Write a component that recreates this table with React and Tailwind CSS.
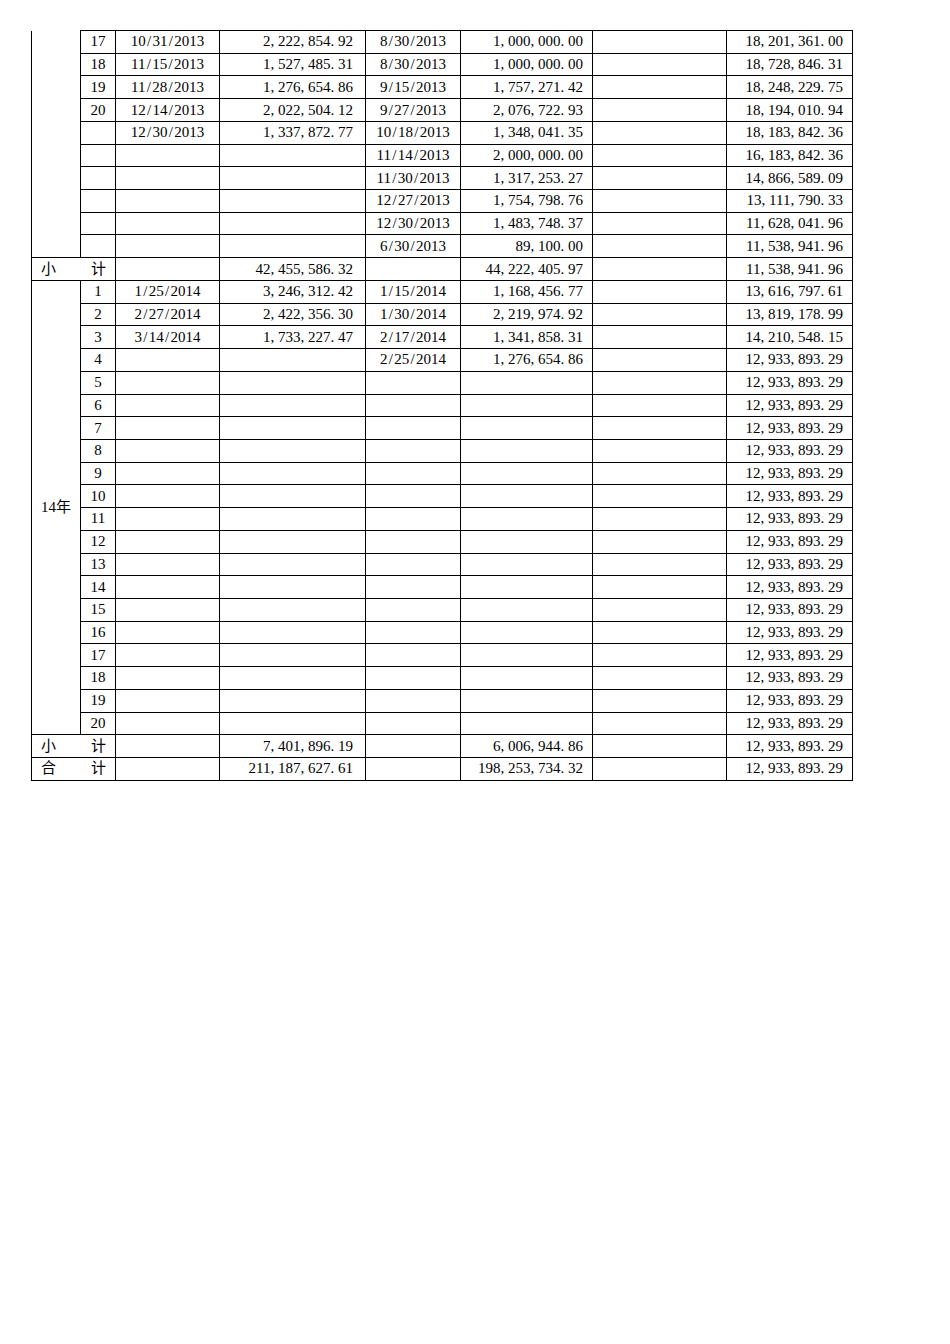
import React from 'react';

const FULL = '12,933,893.29';

const top = [
  ['17', '10/31/2013', '2,222,854.92', '8/30/2013', '1,000,000.00', '18,201,361.00'],
  ['18', '11/15/2013', '1,527,485.31', '8/30/2013', '1,000,000.00', '18,728,846.31'],
  ['19', '11/28/2013', '1,276,654.86', '9/15/2013', '1,757,271.42', '18,248,229.75'],
  ['20', '12/14/2013', '2,022,504.12', '9/27/2013', '2,076,722.93', '18,194,010.94'],
  ['', '12/30/2013', '1,337,872.77', '10/18/2013', '1,348,041.35', '18,183,842.36'],
  ['', '', '', '11/14/2013', '2,000,000.00', '16,183,842.36'],
  ['', '', '', '11/30/2013', '1,317,253.27', '14,866,589.09'],
  ['', '', '', '12/27/2013', '1,754,798.76', '13,111,790.33'],
  ['', '', '', '12/30/2013', '1,483,748.37', '11,628,041.96'],
  ['', '', '', '6/30/2013', '89,100.00', '11,538,941.96'],
];

const y14 = [
  ['1', '1/25/2014', '3,246,312.42', '1/15/2014', '1,168,456.77', '13,616,797.61'],
  ['2', '2/27/2014', '2,422,356.30', '1/30/2014', '2,219,974.92', '13,819,178.99'],
  ['3', '3/14/2014', '1,733,227.47', '2/17/2014', '1,341,858.31', '14,210,548.15'],
  ['4', '', '', '2/25/2014', '1,276,654.86', FULL],
];
for (let i = 5; i <= 20; i++) y14.push([String(i), '', '', '', '', FULL]);

// SimSun-like spacing: punctuation takes half an em, like the digits
const N = ({ t }) => (
  <>
    {t.split('').map((c, i) =>
      c === ',' || c === '.' ? (
        <span key={i} className="inline-block w-[0.5em] text-left">{c}</span>
      ) : c === '/' ? (
        <span key={i} className="inline-block w-[0.45em] text-center">{c}</span>
      ) : (
        c
      )
    )}
  </>
);

const td = 'border border-black p-0 whitespace-nowrap';

const Cells = ({ r }) => (
  <>
    <td className={`${td} text-center`}><N t={r[0]} /></td>
    <td className={`${td} text-center`}><N t={r[1]} /></td>
    <td className={`${td} text-right pr-[12px]`}><N t={r[2]} /></td>
    <td className={`${td} text-center`}><N t={r[3]} /></td>
    <td className={`${td} text-right pr-[9px]`}><N t={r[4]} /></td>
    <td className={td}></td>
    <td className={`${td} text-right pr-[9px]`}><N t={r[5]} /></td>
  </>
);

const Total = ({ a, b, c, d, e }) => (
  <tr className="h-[22.73px]">
    <td colSpan={2} className={td}>
      <div className="flex justify-between pl-[9px] pr-[9px]">
        <span>{a}</span>
        <span>{b}</span>
      </div>
    </td>
    <td className={td}></td>
    <td className={`${td} text-right pr-[12px]`}><N t={c} /></td>
    <td className={td}></td>
    <td className={`${td} text-right pr-[9px]`}><N t={d} /></td>
    <td className={td}></td>
    <td className={`${td} text-right pr-[9px]`}><N t={e} /></td>
  </tr>
);

export default function App() {
  return (
    <div className="w-[950px] h-[1344px] bg-white pt-[30px] pl-[31px] text-black text-[15px] leading-none font-['Liberation_Serif','Noto_Sans_CJK_SC',serif]">
      <table className="table-fixed border-collapse w-[821px]">
        <colgroup>
          <col className="w-[49px]" />
          <col className="w-[35px]" />
          <col className="w-[104px]" />
          <col className="w-[146px]" />
          <col className="w-[95px]" />
          <col className="w-[132px]" />
          <col className="w-[134px]" />
          <col className="w-[126px]" />
        </colgroup>
        <tbody>
          {top.map((r, i) => (
            <tr key={i} className="h-[22.73px]">
              {i === 0 && <td rowSpan={10} className="border-l border-r border-black p-0"></td>}
              <Cells r={r} />
            </tr>
          ))}
          <Total a="小" b="计" c="42,455,586.32" d="44,222,405.97" e="11,538,941.96" />
          {y14.map((r, i) => (
            <tr key={i} className="h-[22.73px]">
              {i === 0 && (
                <td rowSpan={20} className={`${td} text-center`}>14年</td>
              )}
              <Cells r={r} />
            </tr>
          ))}
          <Total a="小" b="计" c="7,401,896.19" d="6,006,944.86" e={FULL} />
          <Total a="合" b="计" c="211,187,627.61" d="198,253,734.32" e={FULL} />
        </tbody>
      </table>
    </div>
  );
}
